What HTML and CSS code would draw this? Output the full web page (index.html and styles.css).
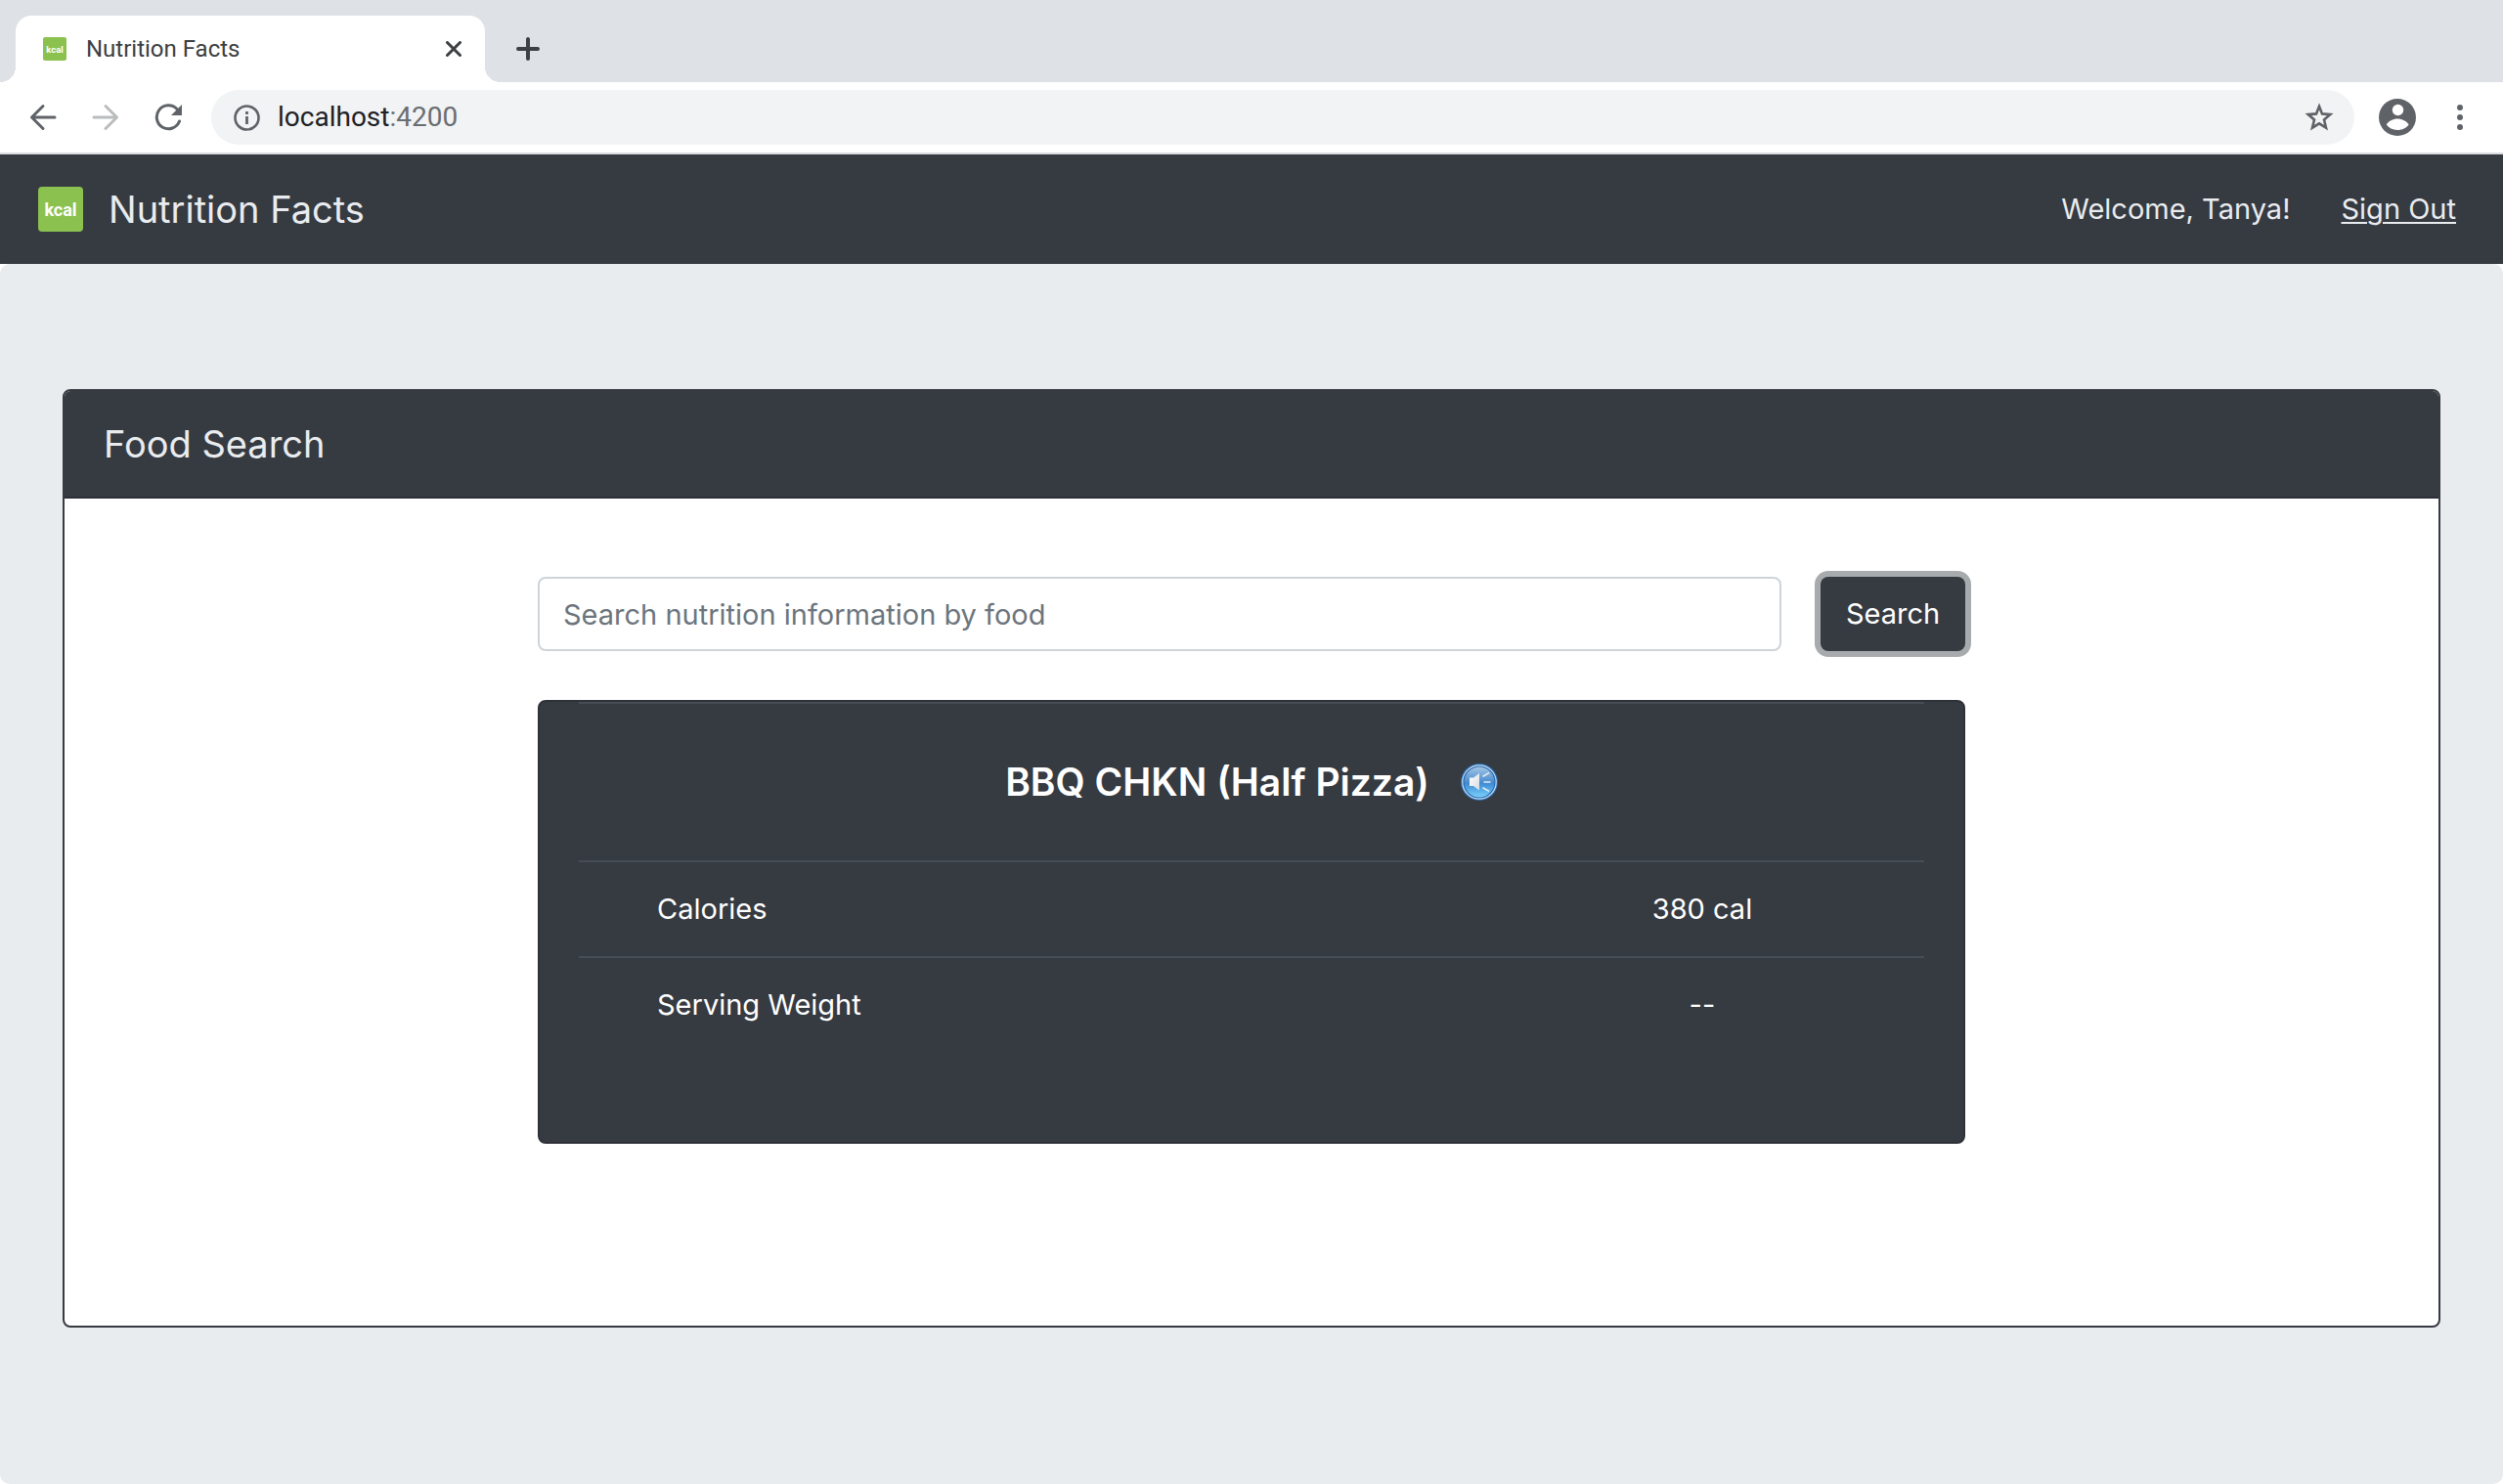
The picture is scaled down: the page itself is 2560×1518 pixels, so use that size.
FILE: index.html
```html
<!DOCTYPE html>
<html lang="en">
<head>
<meta charset="utf-8">
<meta name="viewport" content="width=device-width, initial-scale=1">
<title>Nutrition Facts</title>
<link rel="stylesheet" href="styles.css">
</head>
<body>
<div class="window">
  <div class="tabstrip">
    <div class="tab">
      <svg class="favicon" viewBox="0 0 46 46" aria-hidden="true"><rect width="46" height="46" rx="4" fill="#8bc14e"/><text class="kcal" x="23" y="30" text-anchor="middle">kcal</text></svg>
      <span class="tab-title">Nutrition Facts</span>
      <button class="icon-button" type="button" aria-label="Close tab"><svg width="16" height="16" viewBox="0 0 16 16"><path d="M1.5 1.5l13 13M14.5 1.5l-13 13" stroke="#3c4043" stroke-width="3" stroke-linecap="round"/></svg></button>
    </div>
    <button class="icon-button new-tab" type="button" aria-label="New tab"><svg width="24" height="24" viewBox="0 0 24 24"><path d="M12 2v20M2 12h20" stroke="#3c4043" stroke-width="4" stroke-linecap="round"/></svg></button>
  </div>
  <div class="toolbar">
    <div class="history">
      <button class="icon-button" type="button" aria-label="Back"><svg width="28" height="28" viewBox="0 0 28 28"><path d="M26 14H3M14 2.5L2.5 14 14 25.500" fill="none" stroke="#5f6368" stroke-width="3" stroke-linecap="round" stroke-linejoin="round"/></svg></button>
      <button class="icon-button" type="button" aria-label="Forward"><svg width="28" height="28" viewBox="0 0 28 28"><path d="M2 14h23M14 2.500L25.500 14 14 25.500" fill="none" stroke="#babcbe" stroke-width="3" stroke-linecap="round" stroke-linejoin="round"/></svg></button>
      <button class="icon-button" type="button" aria-label="Reload"><svg width="28" height="28" viewBox="0 0 28 28"><path d="M25.500 18A12 12 0 1 1 23 5.500" fill="none" stroke="#5f6368" stroke-width="3" stroke-linecap="round"/><path d="M28 1v11H17z" fill="#5f6368"/></svg></button>
    </div>
    <div class="address">
      <svg width="28" height="28" viewBox="0 0 28 28" aria-hidden="true"><circle cx="14.500" cy="14.500" r="12" fill="none" stroke="#5f6368" stroke-width="2.600"/><path d="M13.100 13h2.800v8h-2.800zM13.100 8h2.800v3h-2.800z" fill="#5f6368"/></svg>
      <span class="url">localhost<span class="port">:4200</span></span>
      <button class="icon-button" type="button" aria-label="Bookmark"><svg width="30" height="30" viewBox="0 0 30 30"><path d="M15 3.800l3 7.600 8.300.7-6.300 5.400 2 8.200-7-4.400-7 4.400 2-8.200-6.300-5.400 8.300-.7z" fill="none" stroke="#5f6368" stroke-width="2.600"/></svg></button>
    </div>
    <button class="icon-button account" type="button" aria-label="Account"><svg width="38" height="38" viewBox="0 0 38 38"><circle cx="19" cy="19" r="19" fill="#5f6368"/><circle cx="19.500" cy="11.500" r="5.700" fill="#fff"/><path d="M7.800 26.500c2-3.600 6.500-6 11.200-6s9.600 2.400 11.600 6c-2.400 3.400-6.700 5.500-11.600 5.500s-8.800-2.100-11.200-5.500z" fill="#fff"/></svg></button>
    <button class="icon-button menu" type="button" aria-label="Menu"><svg width="6" height="26" viewBox="0 0 6 26" fill="#5f6368"><circle cx="3" cy="3" r="3"/><circle cx="3" cy="13" r="3"/><circle cx="3" cy="23" r="3"/></svg></button>
  </div>
  <header class="navbar">
    <svg class="logo" viewBox="0 0 46 46" aria-hidden="true"><rect width="46" height="46" rx="4" fill="#8bc14e"/><text class="kcal" x="23" y="30" text-anchor="middle">kcal</text></svg>
    <span class="brand">Nutrition Facts</span>
    <span>Welcome, Tanya!</span>
    <a class="sign-out" href="#">Sign Out</a>
  </header>
  <main class="page">
    <section class="card">
      <h1 class="card-header">Food Search</h1>
      <div class="card-body">
        <form class="search">
          <input class="search-input" type="text" placeholder="Search nutrition information by food" aria-label="Search nutrition information by food">
          <button class="search-button" type="button">Search</button>
        </form>
        <div class="result">
          <table class="facts">
            <colgroup><col><col class="amount"></colgroup>
            <thead>
              <tr><th colspan="2" scope="colgroup"><div class="food"><span>BBQ CHKN (Half Pizza)</span>
                <button class="icon-button" type="button" aria-label="Read aloud"><svg width="38" height="38" viewBox="0 0 38 38">
                  <defs>
                    <linearGradient id="disc" x1="0" y1="0" x2="0" y2="1"><stop offset="0" stop-color="#a3c4e4"/><stop offset=".5" stop-color="#4a8dcf"/><stop offset=".55" stop-color="#3f8cd6"/><stop offset="1" stop-color="#79d0fa"/></linearGradient>
                    <linearGradient id="horn" x1="0" y1="0" x2="1" y2="1"><stop offset="0" stop-color="#fff"/><stop offset="1" stop-color="#d6dade"/></linearGradient>
                  </defs>
                  <circle cx="19" cy="19" r="19" fill="#2c6cae"/><circle cx="19" cy="19" r="17.200" fill="#2866ad" stroke="#c5dff4" stroke-width="1.200"/><circle cx="19" cy="19" r="15.400" fill="url(#disc)"/>
                  <path d="M9 14.500h4l6-4.500v17.500L13 23H9z" fill="url(#horn)"/><path d="M23 13l5.500-3.200M24 19h6M23 25l5.500 3.200" stroke="#e4edf5" stroke-width="1.500" stroke-linecap="round"/>
                </svg></button></div></th></tr>
            </thead>
            <tbody>
              <tr><th scope="row">Calories</th><td>380 cal</td></tr>
              <tr><th scope="row">Serving Weight</th><td>--</td></tr>
            </tbody>
          </table>
        </div>
      </div>
    </section>
  </main>
</div>
</body>
</html>
```
FILE: styles.css
```css
* { box-sizing: border-box; }
body {
  margin: 0;
  background: #fff;
  color: #e9ecef;
  font: 29px/48px Inter, "Liberation Sans", sans-serif;
}
button, input { font: inherit; }
svg { display: block; flex: none; }
.window { display: flex; flex-direction: column; min-height: 100vh; }
.icon-button { display: block; flex: none; padding: 0; border: 0; background: none; }
.kcal { font: bold 18px Roboto, sans-serif; fill: #fff; }

/* Browser tabs */
.tabstrip { display: flex; align-items: flex-end; height: 84px; padding-left: 16px; background: #dee1e6; }
.tab {
  position: relative;
  display: flex;
  align-items: center;
  width: 480px;
  height: 68px;
  padding: 0 24px 0 28px;
  border-radius: 16px 16px 0 0;
  background: #fff;
  color: #3c4043;
  font-family: Roboto, sans-serif;
  font-size: 24px;
}
.tab::before, .tab::after { content: ""; position: absolute; bottom: 0; width: 16px; height: 16px; }
.tab::before { left: -16px; background: radial-gradient(circle at 0 0, #dee1e6 16px, #fff 16px); }
.tab::after { right: -16px; background: radial-gradient(circle at 100% 0, #dee1e6 16px, #fff 16px); }
.favicon { width: 24px; height: 24px; margin-right: 20px; }
.tab-title { flex: 1; }
.new-tab { margin: 0 0 22px 32px; }

/* Browser toolbar */
.toolbar { display: flex; align-items: center; height: 74px; padding: 0 41px 0 30px; border-bottom: 2px solid #dadce0; }
.history { display: flex; gap: 36px; margin-right: 30px; }
.address {
  flex: 1;
  display: flex;
  align-items: center;
  height: 56px;
  padding: 0 21px 0 22px;
  border-radius: 28px;
  background: #f1f3f4;
  font-family: Roboto, sans-serif;
  font-size: 28px;
}
.url { flex: 1; margin-left: 18px; color: #202124; }
.port { color: #6a6d71; }
.account { margin-left: 25px; }
.menu { margin-left: 42px; }

/* Application bar */
.navbar { display: flex; align-items: center; height: 112px; padding: 0 48px 0 39px; background: #363a41; }
.logo { width: 46px; height: 46px; margin-right: 26px; }
.brand { flex: 1; font-size: 38px; }
.sign-out { margin-left: 52px; color: inherit; text-underline-offset: 3px; text-decoration-thickness: 2px; }

/* Content */
.page { flex: 1; display: flex; flex-direction: column; padding: 128px 64px 160px; border-radius: 10px; background: #e8ecee; }
.card { flex: 1; border: 2px solid #363a41; border-radius: 8px; background: #fff; overflow: hidden; }
.card-header {
  margin: 0;
  padding: 30px 40px;
  border-bottom: 2px solid #2c3036;
  background: #363a41;
  font-size: 38px;
  font-weight: 400;
  line-height: 48px;
}
.card-body { max-width: 1460px; margin: 0 auto; padding: 80px 0; }
.search { display: flex; gap: 40px; margin-bottom: 50px; }
.search-input {
  flex: 1;
  min-width: 0;
  height: 76px;
  padding: 0 24px;
  border: 2px solid #ced4da;
  border-radius: 8px;
  background: #fff;
  color: #495057;
}
.search-input::placeholder { color: #6c757d; opacity: 1; }
.search-button {
  height: 76px;
  width: 148px;
  padding: 0;
  border: 0;
  border-radius: 8px;
  background: #363a41;
  color: #fff;
  box-shadow: 0 0 0 6px #a7abad;
}
.result { min-height: 454px; padding: 0 40px 40px; border: 2px solid #2e3238; border-radius: 8px; background: #363a41; color: #fff; }
.facts { width: 100%; table-layout: fixed; border-collapse: separate; border-spacing: 0; }
.facts th, .facts td { height: 98px; padding: 0; border-top: 2px solid #454d55; font-weight: 400; text-align: center; }
.facts .amount { width: 33%; }
.facts tbody th { padding-left: 80px; text-align: left; }
.facts thead th { height: 162px; font-size: 39px; font-weight: 600; }
.food { display: flex; align-items: center; justify-content: center; gap: 32px; }
```
